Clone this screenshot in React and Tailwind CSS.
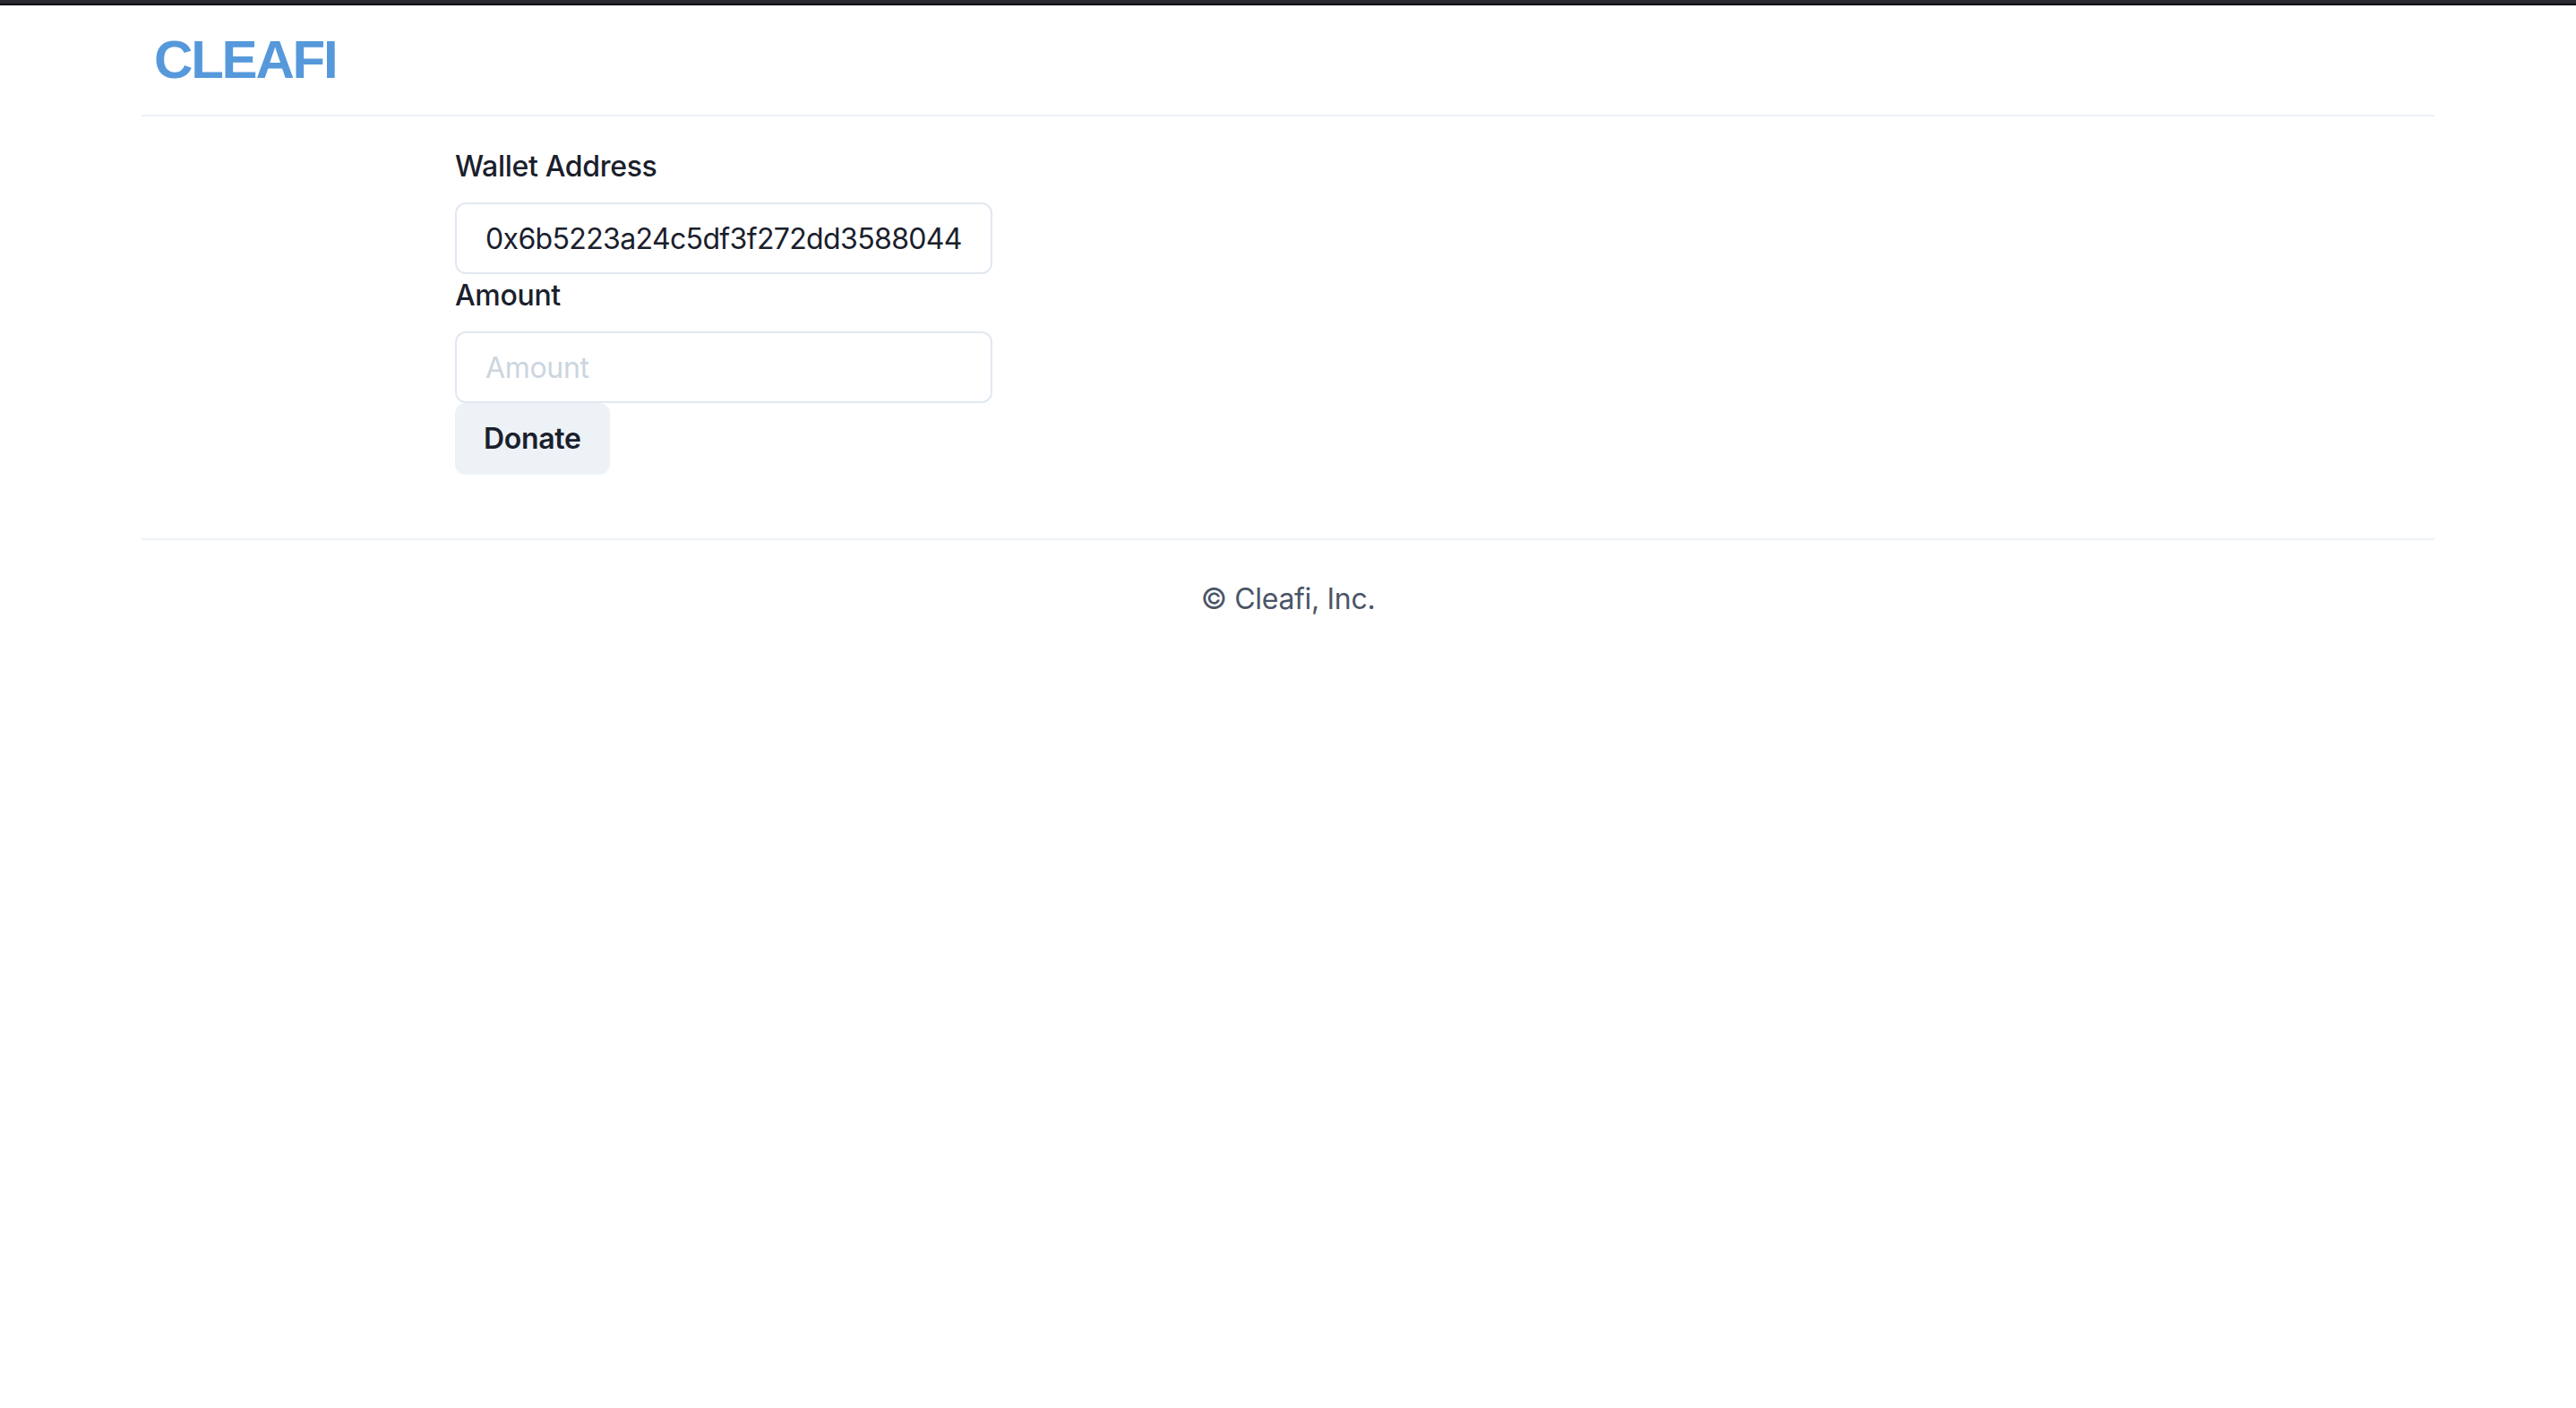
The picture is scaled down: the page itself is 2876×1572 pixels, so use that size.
import React from 'react';

const App = () => {
  return (
    <div className="min-h-screen bg-white tracking-[-0.02em]" style={{ fontFamily: 'Inter, "Noto Sans", sans-serif' }}>
      {/* window strip */}
      <div className="h-[4px] bg-[#2b2a33]"></div>
      <div className="h-[2px] bg-black"></div>

      <div className="max-w-[2560px] mx-auto">
        {/* Header */}
        <header className="h-[124px] flex items-center pl-[14px] border-b-2 border-[#edf2f7]">
          <span
            className="text-[60px] font-bold tracking-[-2.2px] text-[#5699db] leading-none"
            style={{ fontFamily: '"Liberation Sans", Arial, sans-serif' }}
          >
            CLEAFI
          </span>
        </header>

        {/* Donate form */}
        <main className="pt-[32px] pb-[71px] pl-[350px]">
          <div className="w-[600px] flex flex-col">
            <label className="text-[32px] leading-[48px] font-medium text-[#1a202c] mb-[16px]">
              Wallet Address
            </label>
            <input
              readOnly
              defaultValue="0x6b5223a24c5df3f272dd3588044"
              className="h-[80px] w-full px-[32px] text-[32px] tracking-[-0.02em] text-[#1a202c] border-2 border-[#e2e8f0] rounded-[12px] outline-none bg-white"
            />
            <label className="text-[32px] leading-[48px] font-medium text-[#1a202c] mb-[16px]">
              Amount
            </label>
            <input
              placeholder="Amount"
              className="h-[80px] w-full px-[32px] text-[32px] text-[#1a202c] placeholder:text-[#cbd5e0] border-2 border-[#e2e8f0] rounded-[12px] outline-none bg-white"
            />
            <div>
              <button className="h-[80px] px-[32px] text-[32px] font-semibold text-[#1a202c] bg-[#edf2f7] rounded-[12px]">
                Donate
              </button>
            </div>
          </div>
        </main>

        {/* Footer */}
        <footer className="border-t-2 border-[#edf2f7] pt-[42px] pb-[40px] text-center">
          <p className="text-[32px] leading-[48px] text-[#4a5568]">© Cleafi, Inc.</p>
        </footer>
      </div>
    </div>
  );
};

export default App;
